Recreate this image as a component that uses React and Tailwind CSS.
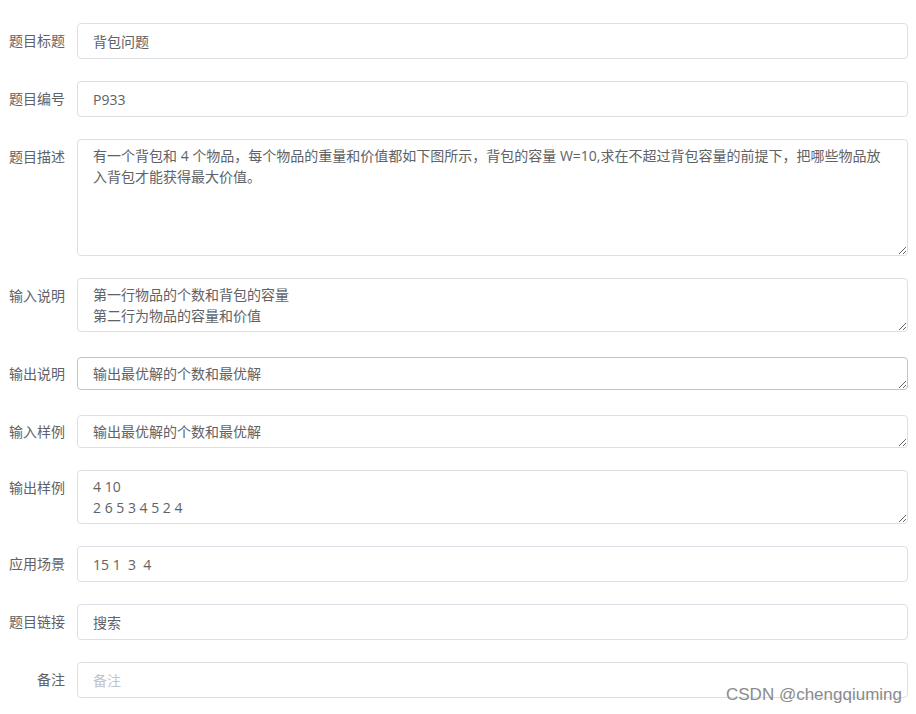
import React from 'react'

const FONT = { fontFamily: '"Open Sans", "Noto Sans CJK SC", sans-serif' }

const ROWS = [
  { label: '题目标题', type: 'input', value: '背包问题', mb: 'mb-[22px]' },
  { label: '题目编号', type: 'input', value: 'P933', mb: 'mb-[22px]' },
  {
    label: '题目描述',
    type: 'textarea',
    h: 'h-[117px]',
    value:
      '有一个背包和 4 个物品，每个物品的重量和价值都如下图所示，背包的容量 W=10,求在不超过背包容量的前提下，把哪些物品放\n入背包才能获得最大价值。',
    mb: 'mb-[22px]',
  },
  { label: '输入说明', type: 'textarea', h: 'h-[54px]', value: '第一行物品的个数和背包的容量\n第二行为物品的容量和价值', mb: 'mb-[25px]' },
  { label: '输出说明', type: 'textarea', h: 'h-[33px]', small: true, value: '输出最优解的个数和最优解', mb: 'mb-[25px]', hover: true },
  { label: '输入样例', type: 'textarea', h: 'h-[33px]', small: true, value: '输出最优解的个数和最优解', mb: 'mb-[22px]' },
  { label: '输出样例', type: 'textarea', h: 'h-[54px]', value: '4 10\n2 6 5 3 4 5 2 4', mb: 'mb-[22px]' },
  { label: '应用场景', type: 'input', value: '15 1  3  4', mb: 'mb-[22px]' },
  { label: '题目链接', type: 'input', value: '搜索', mb: 'mb-[22px]' },
  { label: '备注', type: 'input', value: '', placeholder: '备注', mb: '' },
]

function Field({ row }) {
  if (row.type === 'input') {
    return (
      <input
        readOnly
        value={row.value}
        placeholder={row.placeholder}
        className="w-full h-9 px-[15px] border border-[#dcdfe6] rounded text-sm text-[#606266] bg-white outline-none placeholder:text-[#c0c4cc]"
        style={FONT}
      />
    )
  }
  return (
    <textarea
      readOnly
      wrap="off"
      value={row.value}
      className={
        'block w-full px-[15px] py-[5px] border rounded text-sm leading-[21px] text-[#606266] bg-white outline-none overflow-hidden resize-y ' +
        row.h +
        (row.hover ? ' border-[#c0c4cc]' : ' border-[#dcdfe6]')
      }
      style={FONT}
    />
  )
}

export default function App() {
  return (
    <div className="relative w-[916px] h-[714px] bg-white overflow-hidden" style={FONT}>
      <div className="pt-[23px] pr-2">
        {ROWS.map((row) => (
          <div key={row.label} className={'flex items-start ' + row.mb}>
            <label
              className={
                'w-[77px] shrink-0 pr-3 text-right text-sm text-[#606266] ' +
                (row.small ? 'leading-[33px]' : 'leading-9')
              }
            >
              {row.label}
            </label>
            <div className="flex-1 min-w-0">
              <Field row={row} />
            </div>
          </div>
        ))}
      </div>
      <div
        className="absolute left-[726px] top-[682px] text-[17px] text-[#8a8a8a] whitespace-nowrap"
        style={{ fontFamily: '"Liberation Sans", Arial, sans-serif', textShadow: '0 0 2px #fff' }}
      >
        CSDN @chengqiuming
      </div>
    </div>
  )
}
